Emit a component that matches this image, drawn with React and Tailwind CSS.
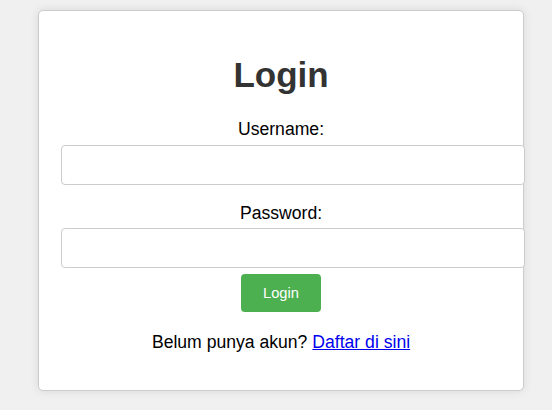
export default function App() {
  return (
    <div className="min-h-screen bg-[#f0f0f0] pt-[10px] pl-[38px] font-['Liberation_Sans',Arial,sans-serif]">
      {/* Login card */}
      <div className="w-[486px] h-[381px] bg-white border border-[#cccccc] rounded-[5px] shadow-[0_0_10px_rgba(0,0,0,0.1)] pt-[44px]">
        <h1 className="text-[35px] leading-[40px] font-bold text-center text-[#333333]">Login</h1>
        <label className="block mt-[24px] text-[17.6px] leading-[20px] text-center text-black">Username:</label>
        <input
          type="text"
          className="block mt-[6px] ml-[22px] w-[464px] h-[40px] border border-[#cccccc] rounded-[4px] bg-white px-[10px] outline-none"
        />
        <label className="block mt-[18px] text-[17.6px] leading-[20px] text-center text-black">Password:</label>
        <input
          type="password"
          className="block mt-[5px] ml-[22px] w-[464px] h-[40px] border border-[#cccccc] rounded-[4px] bg-white px-[10px] outline-none"
        />
        <button className="block mt-[6px] mx-auto w-[80px] h-[38px] bg-[#4caf50] text-white text-[14.7px] rounded-[4px]">
          Login
        </button>
        <p className="mt-[20px] text-[17.6px] leading-[20px] text-center text-black">
          Belum punya akun?{" "}
          <a href="#" className="text-[#0000ee] underline">
            Daftar di sini
          </a>
        </p>
      </div>
    </div>
  );
}
